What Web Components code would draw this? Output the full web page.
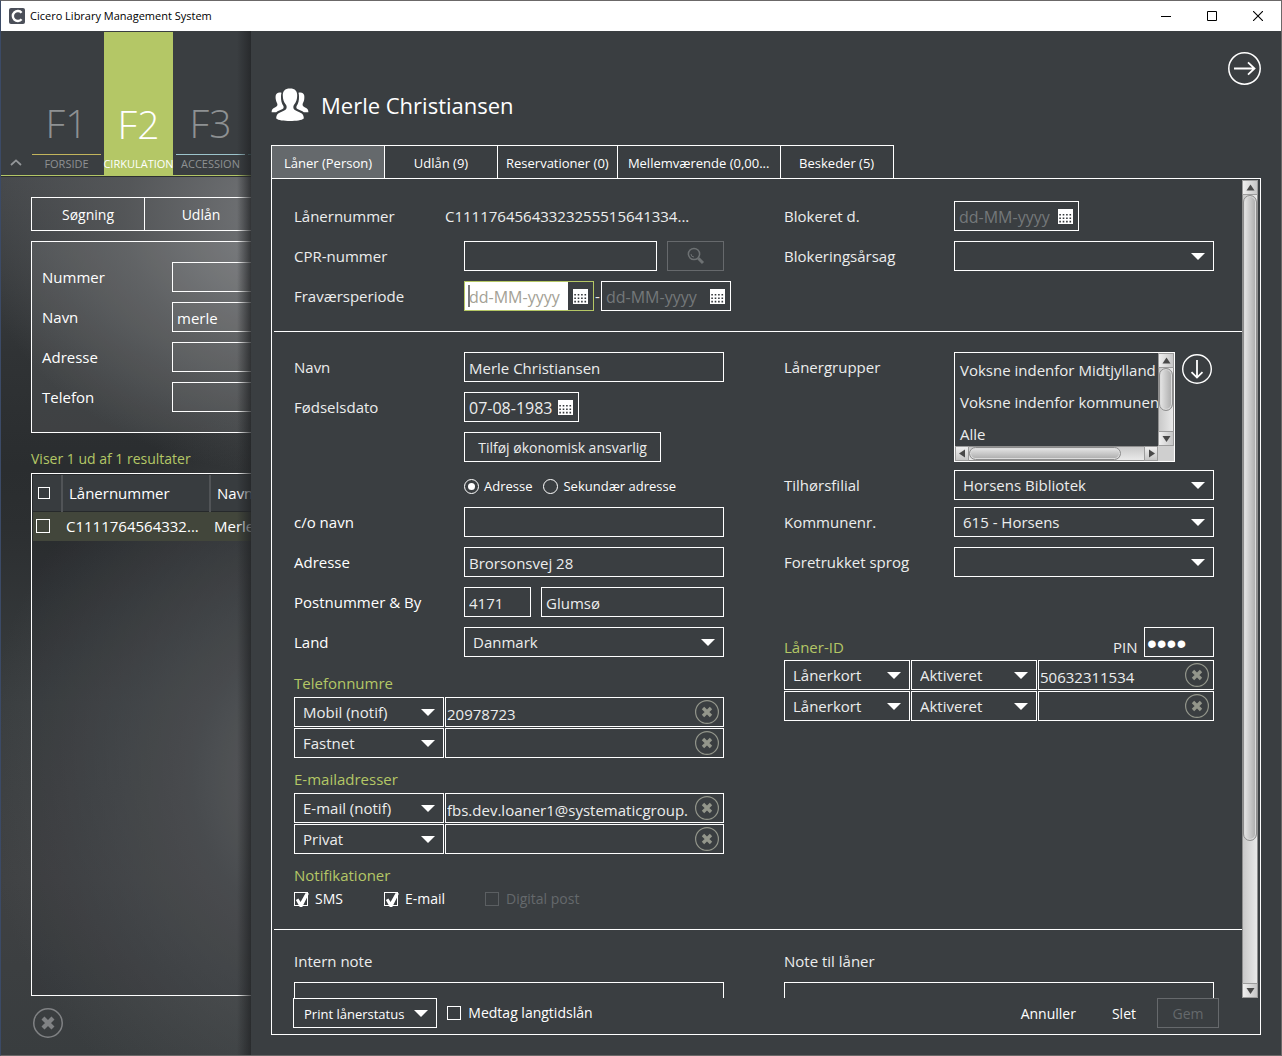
<!DOCTYPE html>
<html lang="da">
<head>
<meta charset="utf-8">
<title>Cicero Library Management System</title>
<style>
  html, body { margin: 0; height: 100%; }
  body { font: 15px/20px "Open Sans", "Noto Sans", sans-serif; color: #eceded; background: #3a3e41; overflow: hidden; }
</style>
</head>
<body>
<lms-window></lms-window>
<script>
const BASE = `
  *, *::before, *::after { box-sizing: border-box; }
  button, input, select, textarea { font: inherit; color: inherit; margin: 0; border-radius: 0; outline: none; }
  button { background: none; border: 0; padding: 0; cursor: pointer; }
  svg { display: block; flex: none; }
`;
function define(name, css, html) {
  customElements.define(name, class extends HTMLElement {
    constructor() {
      super();
      this.attachShadow({ mode: 'open' });
    }
    connectedCallback() {
      this.shadowRoot.innerHTML = `<style>${BASE}${css}</style>${typeof html === 'function' ? html(this) : html}`;
    }
  });
}

const ICON = {
  arrow: '<svg width="14" height="7" viewBox="0 0 14 7"><path d="M0 0h14L7 7z" fill="#fff"/></svg>',
  calendar: '<svg width="15" height="15" viewBox="0 0 15 15"><path fill="#fff" d="M0 0h15v15H0z"/><path stroke="#33373a" stroke-width="1.6" stroke-dasharray="1.6 1.8" d="M1.3 5.8h12.2M1.3 9.2h12.2M1.3 12.6h12.2"/></svg>',
  clear: '<svg width="24" height="24" viewBox="0 0 24 24" fill="none"><circle cx="12" cy="12" r="11.4" stroke="currentColor" stroke-width="1.2"/><path d="M8 8l8 8M16 8l-8 8" stroke="currentColor" stroke-width="3.4"/></svg>'
};

/* Single control: text box, date box, drop-down */
const CONTROL_CSS = `
  .box { display: flex; align-items: center; flex: 1; min-width: 0; height: 30px; border: 1px solid #fff; background: var(--fill, transparent); }
  .box.sized { flex: none; width: var(--w); }
  .box input { flex: 1; min-width: 0; width: 0; height: 100%; border: 0; background: none; padding: 1px 0 0 4px; }
  .box.snug input { padding: 3px 0 0 1px; }
  .box.date input { font-size: 16px; }
  .box.date button { padding: 0 5px; }
  .box input::placeholder { color: #74787a; opacity: 1; }
  .box.active { border-color: #b5c765; }
  .box.active input { background: linear-gradient(#7b7b7b, #7b7b7b) 3px 3px / 2px 22px no-repeat #fff; }
  .box.active input::placeholder { color: #a3a195; }
  .box .clear { color: #93968b; padding-right: 4px; }
  .box.pin input { font: 28px "Liberation Sans", sans-serif; padding: 3px 0 0 2px; color: #fff; }
  .box.select { display: grid; }
  .box.select > * { grid-area: 1 / 1; }
  .box.select select { appearance: none; border: 0; background: none; width: 100%; height: 28px; padding: 0 26px 0 8px; }
  .box.select option { background: #3a3e41; }
  .box.select svg { justify-self: end; margin-right: 8px; pointer-events: none; }
`;
function control(el, aria) {
  const a = n => el.getAttribute(n) || '';
  const kind = a('kind') || 'text';
  const name = aria ? `aria-label="${a('name')}"` : '';
  const cls = ['box', kind, el.hasAttribute('w') && 'sized', el.hasAttribute('active') && 'active', el.hasAttribute('snug') && 'snug'].filter(Boolean).join(' ');
  const style = el.hasAttribute('w') ? `style="--w:${a('w')}px"` : '';
  let inner;
  if (kind === 'select') inner = `<select id="c" ${name}><option>${a('value')}</option></select>${ICON.arrow}`;
  else if (kind === 'date') inner = `<input id="c" ${name} value="${a('value')}" placeholder="dd-MM-yyyy"><button aria-label="Kalender">${ICON.calendar}</button>`;
  else if (kind === 'pin') inner = `<input id="c" type="password" value="${a('value')}" autocomplete="off">`;
  else inner = `<input id="c" ${name} value="${a('value')}">` + (el.hasAttribute('clearable') ? `<button class="clear" aria-label="Ryd">${ICON.clear}</button>` : '');
  return `<div class="${cls}" ${style}>${inner}</div>`;
}
define('lms-control', `:host { display: flex; min-width: 0; } ${CONTROL_CSS}`, el => control(el, true));

/* Label with its control; extra content goes in the slot */
define('lms-field', `
  :host { display: flex; align-items: var(--align, center); height: 30px; }
  label { flex: none; width: var(--label, 170px); color: var(--ink, inherit); }
  ::slotted(*) { flex: none; }
  ${CONTROL_CSS}`,
  el => `<label for="c">${el.getAttribute('label')}</label>${control(el)}<slot></slot>`);

/* Check box or radio button with caption */
define('lms-choice', `
  :host { display: flex; }
  label { display: flex; align-items: center; gap: 7px; font-size: 14px; color: #fff; }
  .dim { color: #65696c; }
  input { appearance: none; flex: none; display: grid; place-items: center; width: var(--side, 14px); height: var(--side, 14px); border: 1px solid #fff; background: none; }
  .dim input { border-color: #5b5f62; }
  input[type=checkbox]:checked::before { content: ""; width: 14px; height: 14px; background: #fff; clip-path: polygon(6% 50%, 24% 40%, 40% 64%, 76% 0, 100% 4%, 52% 100%, 34% 100%); }
  .round { gap: 5px; font-size: 13px; }
  .round input { width: 15px; height: 15px; border-radius: 50%; }
  .round input:checked::before { content: ""; width: 7px; height: 7px; border-radius: 50%; background: #fff; }`,
  el => {
    const has = n => el.hasAttribute(n);
    return `<label class="${has('radio') ? 'round' : ''} ${has('off') ? 'dim' : ''}"><input type="${has('radio') ? 'radio' : 'checkbox'}" ${has('on') ? 'checked' : ''} ${has('off') ? 'disabled' : ''}><slot></slot></label>`;
  });

define('lms-scrollbar', `
  :host { display: flex; flex: none; --dir: to right; background: #d2d2d2; }
  :host([axis=y]) { flex-direction: column; width: 16px; }
  :host([axis=x]) { --dir: to bottom; height: 15px; }
  button { flex: none; display: grid; place-items: center; width: 16px; height: 15px; background: linear-gradient(var(--dir), #efefef, #c6c6c6); border: 1px solid #9c9c9c; }
  :host([axis=x]) button { width: 14px; }
  .track { flex: 1; display: flex; flex-direction: inherit; background: linear-gradient(var(--dir), #c9c9c9, #e9e9e9); border: 0 solid #8f8f8f; border-width: 0 1px; }
  :host([axis=x]) .track { border-width: 1px 0; }
  .thumb { flex: var(--size); border: 1px solid #8c8c8c; border-radius: 8px; background: linear-gradient(var(--dir), #e6e6e6, #ababab); box-shadow: inset 0 0 0 1px #dcdcdc; }
  .rest { flex: var(--rest); }`,
  el => {
    const y = el.getAttribute('axis') === 'y';
    const tri = d => `<svg width="9" height="9" viewBox="0 0 9 9"><path d="${d}" fill="#484848"/></svg>`;
    return `<button aria-label="Rul tilbage">${tri(y ? 'M.5 7.5h8l-4-6z' : 'M7 .5v8l-6-4z')}</button>
      <div class="track" style="--size:${el.getAttribute('size')};--rest:${el.getAttribute('rest')}"><div class="thumb"></div><div class="rest"></div></div>
      <button aria-label="Rul frem">${tri(y ? 'M.5 2h8l-4 6z' : 'M2 .5v8l6-4z')}</button>`;
  });

define('lms-titlebar', `
  :host { display: flex; align-items: center; height: 30px; flex: none; padding-left: 8px; background: #fff; color: #000; font: 11px/16px "Open Sans", sans-serif; }
  span { flex: 1; padding-left: 5px; }
  button { display: grid; place-items: center; width: 46px; height: 30px; }`,
  `<svg width="16" height="16" viewBox="0 0 16 16"><rect width="16" height="16" rx="2" fill="#4b4f59"/><path d="M12.6 4.7A5 5 0 1 0 12.6 11.3" fill="none" stroke="#fff" stroke-width="2.4"/></svg>
   <span>Cicero Library Management System</span>
   <button aria-label="Minimer"><svg width="10" height="10"><path d="M0 5.5h10" stroke="#000"/></svg></button>
   <button aria-label="Maksimer"><svg width="10" height="10"><path d="M.5 .5h9v9h-9z" fill="none" stroke="#000"/></svg></button>
   <button aria-label="Luk"><svg width="10" height="10"><path d="M0 0l10 10M10 0L0 10" stroke="#000" stroke-width="1.1"/></svg></button>`);

define('lms-fkey', `
  :host { display: block; flex: none; width: 69px; color: #8e9193; }
  a { display: flex; flex-direction: column; height: 143px; color: inherit; text-decoration: none; text-align: center; white-space: nowrap; }
  b { flex: 1; display: flex; align-items: flex-end; justify-content: center; padding-bottom: 9px; font: 300 39px/44px "Open Sans", sans-serif; border-bottom: 1px solid var(--line); }
  span { height: 20px; font-size: 11px; line-height: 17px; display: flex; justify-content: center; }
  :host([on]) { color: #fff; }
  :host([on]) a { background: #b4c766; }
  :host([on]) b { border-color: #3a3e41; }`,
  el => `<a href="#"><b>${el.getAttribute('key')}</b><span><slot></slot></span></a>`);

define('lms-search-pane', `
  :host { position: relative; display: flex; flex-direction: column; flex: none; width: 250px; overflow: hidden; white-space: nowrap; }
  :host::after { content: ""; position: absolute; inset: 0 0 0 auto; width: 14px; background: linear-gradient(to right, transparent, rgba(35,37,39,.8)); pointer-events: none; }
  nav { display: flex; flex: none; align-items: flex-end; gap: 3px; padding: 1px 0 0 8px; width: 480px; background: #3a3e41; border-bottom: 1px solid #b4c766; }
  nav > button { width: 20px; padding: 0 0 9px 1px; }
  .body { flex: 1; width: 440px; min-height: 0; display: flex; flex-direction: column; padding: 20px 0 17px 30px; border-top: 1px solid #2c2f31;
    background: radial-gradient(340px 260px at 310px 40px, #7b7d80, rgba(90,92,94,.75) 55%, transparent),
      radial-gradient(350px 380px at 330px 600px, #696b6d, rgba(85,88,90,.75) 40%, transparent),
      linear-gradient(#44474a, #303335 20%, #2a2d2f 33%, #2c2f31 40%, #393d3f 60%, #3f4143 80%, #393d3f); }
  .tabs { display: flex; flex: none; }
  .tabs button { width: 114px; height: 34px; border: 1px solid #fff; margin-right: -1px; color: #fff; font-size: 14px; padding-top: 2px; }
  form { margin: 10px 0 16px; padding: 20px 10px; height: 192px; flex: none; border: 1px solid #fff; background: rgba(255,255,255,.09); display: flex; flex-direction: column; gap: 10px; color: #fff; --label: 130px; --fill: rgba(255,255,255,.04); }
  .count { color: #b4c766; font-size: 14px; line-height: 20px; }
  .grid { flex: 1; min-height: 0; margin: 4px 0 12px; border: 1px solid #fff; padding: 1px; color: #fff; background: rgba(20,23,25,.1); }
  table { border-collapse: collapse; table-layout: fixed; width: 100%; text-align: left; }
  th { height: 36px; background: #383c3f; font-weight: 400; padding: 0 0 0 6px; border-right: 2px solid #515457; border-bottom: 1px solid #26292b; }
  th:first-child { padding-left: 5px; --side: 12px; }
  td { height: 30px; background: #42463b; padding: 0 0 0 4px; }
  td:first-child { padding-left: 3px; }
  .close { align-self: flex-start; color: #808284; margin-left: 2px; }
  .close svg { width: 30px; height: 30px; }`,
  `<nav>
    <button aria-label="Skjul menu"><svg width="12" height="7" viewBox="0 0 12 7"><path d="M1 6l5-4.6L11 6" fill="none" stroke="#94979a" stroke-width="1.8"/></svg></button>
    <lms-fkey key="F1" style="--line:#c2b45c">FORSIDE</lms-fkey>
    <lms-fkey key="F2" on>CIRKULATION</lms-fkey>
    <lms-fkey key="F3" style="--line:#9cc4cc">ACCESSION</lms-fkey>
    <lms-fkey key="" style="--line:#5f9298"></lms-fkey>
   </nav>
   <div class="body">
    <div class="tabs"><button>Søgning</button><button>Udlån</button></div>
    <form>
      <lms-field label="Nummer"></lms-field>
      <lms-field label="Navn" value="merle"></lms-field>
      <lms-field label="Adresse"></lms-field>
      <lms-field label="Telefon"></lms-field>
    </form>
    <div class="count">Viser 1 ud af 1 resultater</div>
    <div class="grid"><table>
      <colgroup><col style="width:29px"><col style="width:148px"><col></colgroup>
      <thead><tr><th><lms-choice></lms-choice></th><th>Lånernummer</th><th>Navn</th></tr></thead>
      <tbody><tr><td><lms-choice></lms-choice></td><td>C1111764564332...</td><td>Merle</td></tr></tbody>
    </table></div>
    <button class="close" aria-label="Luk">${ICON.clear}</button>
   </div>`);

define('lms-tabs', `
  :host { display: flex; flex: none; margin-bottom: -1px; }
  button { min-width: 114px; height: 34px; padding: 2px 8px 0; border: 1px solid #fff; margin-right: -1px; color: #fff; font-size: 13px; white-space: nowrap; }
  .on { background: #65696c; }
  .wide { min-width: 164px; }`,
  `<button class="on">Låner (Person)</button><button>Udlån (9)</button><button>Reservationer (0)</button><button class="wide">Mellemværende (0,00...</button><button>Beskeder (5)</button>`);

define('lms-groups', `
  :host { display: flex; flex: 1; align-items: flex-start; gap: 7px; }
  .list { width: 221px; height: 110px; border: 1px solid #fff; display: grid; grid-template: minmax(0, 1fr) auto / minmax(0, 1fr) auto; }
  ul { margin: 0; padding: 1px 0 0 5px; list-style: none; overflow: hidden; white-space: nowrap; line-height: 32px; }
  .corner { background: #cfcfcf; }
  button { margin-top: 2px; }`,
  `<div class="list"><ul><li>Voksne indenfor Midtjylland</li><li>Voksne indenfor kommunen</li><li>Alle</li></ul>
    <lms-scrollbar axis="y" size="43" rest="21"></lms-scrollbar><lms-scrollbar axis="x" size="152" rest="23"></lms-scrollbar><div class="corner"></div></div>
   <button aria-label="Vis grupper"><svg width="30" height="30" viewBox="0 0 30 30" fill="none" stroke="#fff"><circle cx="15" cy="15" r="14.3" stroke-width="1.4"/><path d="M15 6v17M9.5 18.2L15 23.6l5.500-5.400" stroke-width="1.8"/></svg></button>`);

define('lms-loaner-form', `
  :host { display: block; flex: 1; min-width: 0; overflow: hidden; }
  section { display: flex; gap: 60px; padding: 21px 28px 20px 22px; }
  section.next { padding-top: 20px; }
  hr { margin: 0 0 0 2px; border: 0; border-top: 1px solid #fff; }
  .col { flex: 1; min-width: 0; display: flex; flex-direction: column; gap: 10px; }
  .line { display: flex; align-items: center; height: 30px; }
  .line.top { height: 111px; align-items: flex-start; }
  .cap { flex: none; width: 170px; line-height: 30px; }
  .num { width: 151px; }
  .look { width: 57px; height: 30px; margin-left: 10px; border: 1px solid #66696c; display: grid; place-items: center; }
  .dash { width: 7px; text-align: center; }
  .money { margin-left: 170px; align-self: flex-start; width: 197px; height: 30px; border: 1px solid #fff; font-size: 14px; padding-top: 2px; }
  .radios { display: flex; gap: 11px; height: 25px; padding: 3px 0 0 170px; }
  .strong { --ink: #fff; }
  .groups { display: flex; flex-direction: column; gap: 12px; margin-top: 7px; }
  h3 { margin: 0 0 5px; font: inherit; line-height: 18px; color: #b4c766; }
  .rows { display: flex; flex-direction: column; gap: 1px; }
  .pair { display: flex; gap: 1px; }
  .pair lms-control:last-child { flex: 1; }
  .checks { display: flex; height: 20px; }
  .tight { gap: 7px; display: flex; flex-direction: column; }
  .ids { margin-top: 40px; }
  .idhead { display: flex; align-items: flex-end; justify-content: space-between; height: 30px; margin-bottom: 3px; --label: 31px; --align: flex-end; }
  .idhead h3 { margin: 0; line-height: 20px; }
  .note { display: flex; flex-direction: column; gap: 11px; flex: 1; }
  textarea { height: 90px; border: 1px solid #fff; background: none; resize: none; }`,
  `<section>
    <div class="col">
      <div class="line"><span class="cap num">Lånernummer</span><span>C11117645643323255515641334...</span></div>
      <lms-field label="CPR-nummer"><button class="look" aria-label="Søg"><svg width="18" height="18" viewBox="0 0 18 18" fill="none" stroke="#6d7173"><circle cx="7" cy="7" r="5.600" stroke-width="1.500"/><path d="M4 7a3 3 0 0 0 3 3" stroke-width="1"/><path d="M11.300 11.300L16 16" stroke-width="3"/></svg></button></lms-field>
      <lms-field label="Fraværsperiode" kind="date" w="130" active><span class="dash">-</span><lms-control kind="date" w="130" name="Fravær til"></lms-control></lms-field>
    </div>
    <div class="col">
      <lms-field label="Blokeret d." kind="date" w="125"></lms-field>
      <lms-field label="Blokeringsårsag" kind="select"></lms-field>
    </div>
  </section>
  <hr>
  <section class="next">
    <div class="col">
      <lms-field label="Navn" value="Merle Christiansen"></lms-field>
      <lms-field label="Fødselsdato" kind="date" w="115" value="07-08-1983"></lms-field>
      <button class="money">Tilføj økonomisk ansvarlig</button>
      <div class="radios"><lms-choice radio on>Adresse</lms-choice><lms-choice radio>Sekundær adresse</lms-choice></div>
      <lms-field class="strong" label="c/o navn"></lms-field>
      <lms-field class="strong" label="Adresse" value="Brorsonsvej 28"></lms-field>
      <lms-field class="strong" label="Postnummer &amp; By" value="4171" w="67"><lms-control style="flex:1;margin-left:10px" name="By" value="Glumsø"></lms-control></lms-field>
      <lms-field class="strong" label="Land" kind="select" value="Danmark"></lms-field>
      <div class="groups">
        <div><h3>Telefonnumre</h3><div class="rows">
          <div class="pair"><lms-control kind="select" w="150" name="Type" value="Mobil (notif)"></lms-control><lms-control snug clearable name="Telefon" value="20978723"></lms-control></div>
          <div class="pair"><lms-control kind="select" w="150" name="Type" value="Fastnet"></lms-control><lms-control snug clearable name="Telefon"></lms-control></div>
        </div></div>
        <div><h3>E-mailadresser</h3><div class="rows">
          <div class="pair"><lms-control kind="select" w="150" name="Type" value="E-mail (notif)"></lms-control><lms-control snug clearable name="E-mail" value="fbs.dev.loaner1@systematicgroup."></lms-control></div>
          <div class="pair"><lms-control kind="select" w="150" name="Type" value="Privat"></lms-control><lms-control snug clearable name="E-mail"></lms-control></div>
        </div></div>
        <div><h3>Notifikationer</h3><div class="checks">
          <lms-choice on style="width:90px">SMS</lms-choice><lms-choice on style="width:101px">E-mail</lms-choice><lms-choice off>Digital post</lms-choice>
        </div></div>
      </div>
    </div>
    <div class="col">
      <div class="tight">
        <div class="line top"><span class="cap">Lånergrupper</span><lms-groups></lms-groups></div>
        <lms-field label="Tilhørsfilial" kind="select" value="Horsens Bibliotek"></lms-field>
        <lms-field label="Kommunenr." kind="select" value="615 - Horsens"></lms-field>
      </div>
      <lms-field label="Foretrukket sprog" kind="select"></lms-field>
      <div class="ids">
        <div class="idhead"><h3>Låner-ID</h3><lms-field label="PIN" kind="pin" w="70" value="1234"></lms-field></div>
        <div class="rows">
          <div class="pair"><lms-control kind="select" w="126" name="Type" value="Lånerkort"></lms-control><lms-control kind="select" w="126" name="Status" value="Aktiveret"></lms-control><lms-control snug clearable name="Nummer" value="50632311534"></lms-control></div>
          <div class="pair"><lms-control kind="select" w="126" name="Type" value="Lånerkort"></lms-control><lms-control kind="select" w="126" name="Status" value="Aktiveret"></lms-control><lms-control snug clearable name="Nummer"></lms-control></div>
        </div>
      </div>
    </div>
  </section>
  <hr>
  <section>
    <div class="note"><label for="n1">Intern note</label><textarea id="n1"></textarea></div>
    <div class="note"><label for="n2">Note til låner</label><textarea id="n2"></textarea></div>
  </section>`);

define('lms-drawer', `
  :host { display: flex; flex: 1; min-width: 0; flex-direction: column; padding: 0 20px 20px; background: #3a3e41; }
  header { display: flex; justify-content: space-between; align-items: flex-start; height: 114px; flex: none; padding-top: 21px; }
  .who { display: flex; align-items: center; gap: 12px; padding-top: 36px; color: #fff; }
  h1 { margin: 0; font: 22px/34px "Open Sans", sans-serif; }
  .panel { flex: 1; min-height: 0; display: flex; flex-direction: column; border: 1px solid #fff; padding: 1px 2px 6px 0; }
  .view { flex: 1; min-height: 0; display: flex; }
  footer { flex: none; display: flex; align-items: center; height: 30px; padding: 0 39px 0 21px; font-size: 14px; color: #fff; }
  footer button { height: 30px; padding-top: 1px; }
  .print { display: flex; align-items: center; gap: 10px; border: 1px solid #fff; padding-left: 10px; padding-right: 8px; margin-right: 10px; font-size: 13px; }
  .push { margin-left: auto; margin-right: 36px; }
  .save { width: 62px; margin-left: 21px; border: 1px solid #66696c; color: #65696c; }`,
  `<header>
    <div class="who"><svg width="38" height="34" viewBox="0 0 38 34" fill="#fff">
      <path d="M8.500 4.500C4.500 4.800 4.300 8 4.800 11.500c.3 2.300 1.400 3.500 1.600 4.800.2 1.800-1 2.600-3 3.500C1.300 20.800.6 21.800.6 24.300h4.600c1.500-1.400 4.500-2.200 6.300-3.200 1.300-.8 1.300-2 .9-3.100-1.800-2.500-2.500-5.600-2.400-9.200 0-1.400.1-2.800.5-4.100-.7-.2-1.300-.3-2-.2z"/>
      <path d="M29.500 4.500c4 .3 4.200 3.500 3.700 7-.3 2.300-1.400 3.500-1.600 4.800-.2 1.800 1 2.600 3 3.500 2.100 1 2.800 2 2.800 4.500h-4.600c-1.500-1.400-4.500-2.200-6.300-3.200-1.300-.8-1.300-2-.9-3.100 1.800-2.500 2.500-5.600 2.400-9.200 0-1.400-.1-2.800-.5-4.100.7-.2 1.300-.3 2-.2z"/>
      <path d="M19 .5c-5.200 0-7.400 2.600-7.200 7.300.1 3.200.8 6.400 3.300 9.200.8 1.200.8 3.400-.3 4.400-1.600 1.400-5.500 2.300-7.600 4.100-1.500 1.300-2 3-2 5C7 32.300 13 33 19 33s12-.7 13.800-2.500c0-2-.5-3.700-2-5-2.100-1.800-6-2.700-7.600-4.100-1.100-1-1.100-3.200-.3-4.400 2.500-2.800 3.200-6 3.300-9.200C26.400 3.100 24.200.5 19 .5z"/></svg>
      <h1>Merle Christiansen</h1></div>
    <button aria-label="Luk panel"><svg width="33" height="33" viewBox="0 0 33 33" fill="none" stroke="#fff"><circle cx="16.500" cy="16.500" r="15.700" stroke-width="1.500"/><path d="M6 16.500h20.500M20 10.300l6.500 6.200L20 22.700" stroke-width="1.800"/></svg></button>
   </header>
   <lms-tabs></lms-tabs>
   <div class="panel">
    <div class="view"><lms-loaner-form></lms-loaner-form><lms-scrollbar axis="y" size="646" rest="143"></lms-scrollbar></div>
    <footer><button class="print">Print lånerstatus ${ICON.arrow}</button><lms-choice>Medtag langtidslån</lms-choice>
      <button class="push">Annuller</button><button>Slet</button><button class="save" disabled>Gem</button></footer>
   </div>`);

define('lms-window', `
  :host { display: flex; flex-direction: column; height: 100vh; box-sizing: border-box; border: 1px solid #6b6868; border-left-color: #3b4a66; }
  main { flex: 1; min-height: 0; display: flex; }`,
  `<lms-titlebar></lms-titlebar><main><lms-search-pane></lms-search-pane><lms-drawer></lms-drawer></main>`);
</script>
</body>
</html>
